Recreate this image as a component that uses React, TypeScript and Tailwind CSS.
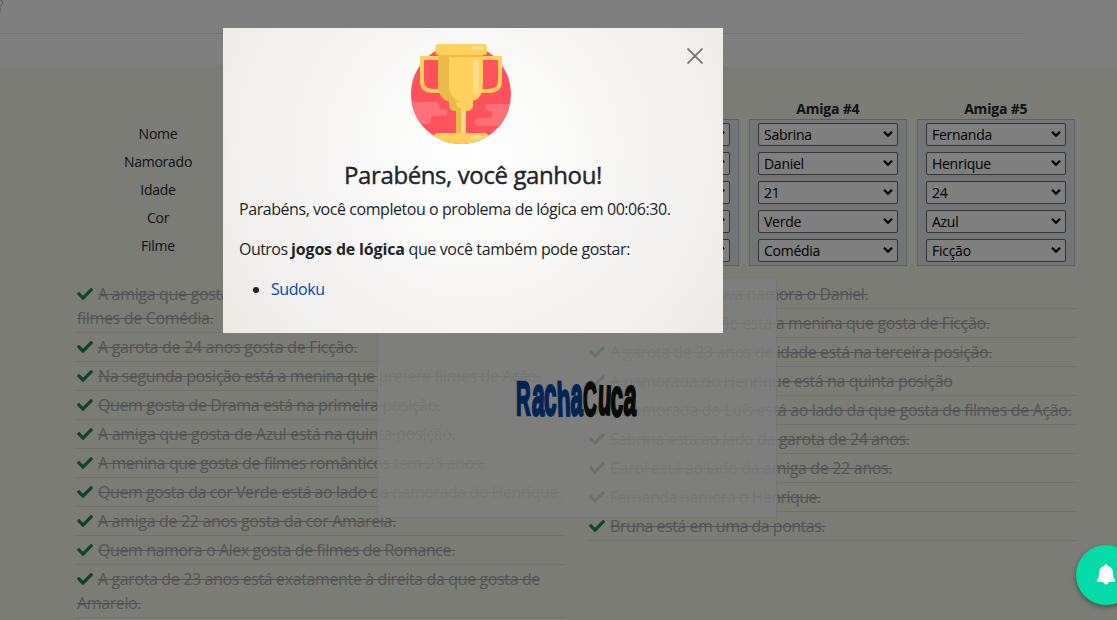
import React from "react";

const left: [string, string][] = [
  ["A amiga que gosta de Verde está ao lado da menina que gosta de filmes de Comédia.", "tracking-[-0.33px]"],
  ["A garota de 24 anos gosta de Ficção.", "tracking-[-0.3px]"],
  ["Na segunda posição está a menina que prefere filmes de Ação.", "tracking-[-0.42px]"],
  ["Quem gosta de Drama está na primeira posição.", "tracking-[-0.39px]"],
  ["A amiga que gosta de Azul está na quinta posição.", "tracking-[-0.29px]"],
  ["A menina que gosta de filmes românticos tem 23 anos.", "tracking-[-0.43px]"],
  ["Quem gosta da cor Verde está ao lado da namorada do Henrique.", "tracking-[-0.43px]"],
  ["A amiga de 22 anos gosta da cor Amarela.", "tracking-[-0.33px]"],
  ["Quem namora o Alex gosta de filmes de Romance.", "tracking-[-0.41px]"],
  ["A garota de 23 anos está exatamente à direita da que gosta de Amarelo.", "tracking-[-0.38px]"],
];

const right: [string, string][] = [
  ["A amiga mais nova namora o Daniel.", "tracking-[-0.4px]"],
  ["Na quinta posição está a menina que gosta de Ficção.", "tracking-[-0.36px]"],
  ["A garota de 23 anos de idade está na terceira posição.", "tracking-[-0.37px]"],
  ["A namorada do Henrique está na quinta posição", "tracking-[-0.41px]"],
  ["A namorada do Luís está ao lado da que gosta de filmes de Ação.", "tracking-[-0.35px]"],
  ["Sabrina está ao lado da garota de 24 anos.", "tracking-[-0.4px]"],
  ["Carol está ao lado da amiga de 22 anos.", "tracking-[-0.35px]"],
  ["Fernanda namora o Henrique.", "tracking-[-0.56px]"],
  ["Bruna está em uma da pontas.", "tracking-[-0.5px]"],
];

const columns = [
  { title: "", values: ["", "", "", "", ""] },
  { title: "", values: ["", "", "", "", ""] },
  { title: "", values: ["", "", "", "", ""] },
  { title: "Amiga #4", values: ["Sabrina", "Daniel", "21", "Verde", "Comédia"] },
  { title: "Amiga #5", values: ["Fernanda", "Henrique", "24", "Azul", "Ficção"] },
];

function Check() {
  return (
    <svg viewBox="0 0 512 512" className="mr-[5px] inline-block size-4 align-[-2px] text-[#198754]" fill="currentColor">
      <path d="M173.898 439.404l-166.4-166.4c-9.997-9.997-9.997-26.206 0-36.204l36.203-36.204c9.997-9.998 26.207-9.998 36.204 0L192 312.69 432.095 72.596c9.997-9.997 26.207-9.997 36.204 0l36.203 36.204c9.997 9.997 9.997 26.206 0 36.204l-294.4 294.401c-9.998 9.997-26.207 9.997-36.204-.001z" />
    </svg>
  );
}

function Clues({ items }: { items: [string, string][] }) {
  return (
    <ul className="w-[488px]">
      {items.map(([text, tracking]) => (
        <li key={text} className="border-b border-[#dededc] pt-0.5 pb-0.5 leading-6">
          <Check />
          <s className={`text-[#a9a9a9] decoration-1 ${tracking}`}>{text}</s>
        </li>
      ))}
    </ul>
  );
}

function Select({ value }: { value: string }) {
  return (
    <div className="flex h-[23px] items-center justify-between rounded-[2px] border border-[#6c6c6c] bg-white pr-[4px] pl-[5px] text-[14px] leading-5 tracking-[-0.25px] text-black">
      <span>{value}</span>
      <svg viewBox="0 0 10 8" className="mb-[2px] h-2 w-2.5" fill="none" stroke="currentColor" strokeWidth="2.2">
        <path d="M1 1.7 5 5.7 9 1.7" />
      </svg>
    </div>
  );
}

function Logo() {
  const glyphs: [string, number, number, number, number, number][] = [
    ["R", -1, 37, 0.42, 1, 0],
    ["a", 14.5, 37, 0.47, 1.14, 2],
    ["c", 27, 36.5, 0.47, 1.14, 0],
    ["h", 40.5, 38, 0.46, 0.98, -2],
    ["a", 53.5, 37, 0.46, 1.14, 0],
    ["C", 66, 37.500, 0.4, 1, 0],
    ["u", 80.500, 36, 0.46, 1.1, 2],
    ["c", 93.500, 37.5, 0.47, 1.12, 0],
    ["a", 106, 36.5, 0.48, 1.1, 3],
  ];
  return (
    <svg viewBox="0 0 120 40" className="h-10 w-[120px] overflow-visible">
      {glyphs.map(([char, x, y, sx, sy, angle], i) => (
        <text
          key={i}
          transform={`translate(${x} ${y}) rotate(${angle}) scale(${sx} ${sy})`}
          fontFamily="Liberation Sans"
          fontWeight="700"
          fontSize="48"
          strokeWidth="2.5"
          className={i < 5 ? "fill-[#0449a8] stroke-[#0449a8]" : "fill-[#161616] stroke-[#161616]"}
        >
          {char}
        </text>
      ))}
    </svg>
  );
}

function Trophy() {
  return (
    <svg viewBox="0 0 100 100" className="size-[100px]">
      <clipPath id="disc"><circle cx="50" cy="50" r="50" /></clipPath>
      <g clipPath="url(#disc)">
        <rect width="100" height="100" fill="#ff525d" />
        <path d="M0 58h25q3 0 3 3v1q0 3 3 3h2a3.500 3.500 0 0 1 0 7H23q-3 0-3 3v1q0 4-4 4H0z" fill="#ff7079" />
        <path d="M100 60H77a3.600 3.600 0 0 0 0 7h2q2.500 0 2.500 2.500T79 74H68a3.500 3.500 0 0 0 0 8h32z" fill="#ff7079" />
        <path d="M23 92q0-3 4-3h46q4 0 4 3v10H23z" fill="#ffd05b" />
      </g>
      <path d="M28 14H11v23q0 10 12 10h12M72 14h17v23q0 10-12 10H65" fill="none" stroke="#ffd05b" strokeWidth="4" />
      <path d="M45 64h9v25h-9z" fill="#ecba4b" />
      <path d="M50 64h5v25h-5z" fill="#ffd05b" />
      <path d="M38 56h24v5q0 6-7 6H45q-7 0-7-6z" fill="#ffd05b" />
      <path d="M38 56h7q0 7 5 9v2h-5q-7 0-7-6z" fill="#ecba4b" />
      <path d="M27 10h45v29q0 19-16 19H43Q27 58 27 39z" fill="#ffd05b" />
      <path d="M27 10h11v30q0 15 12 18h-7Q27 58 27 39z" fill="#ecba4b" />
      <path d="M27 11h45v2H27z" fill="#ecba4b" />
      <rect x="24.500" width="51.500" height="11" rx="3" fill="#ffd05b" />
      <rect x="61" y="2" width="12" height="4" rx="2" fill="#ffdc8c" />
      <rect x="62" y="15" width="6" height="35" rx="3" fill="#ffdc8c" />
      <rect x="51" y="67" width="3" height="22" fill="#ffdc8c" />
      <rect x="59" y="91" width="12" height="4" rx="2" fill="#ffdc8c" />
    </svg>
  );
}

export default function App() {
  return (
    <div className="relative h-[620px] w-[1117px] overflow-hidden bg-white font-['Open_Sans',sans-serif] text-base text-[#212529]">
      <header className="h-[66px]">
        <div className="h-[34px] w-[1023px] border-b border-[#e9e9e9]">
          <svg viewBox="0 0 4 14" className="h-3.5 w-1" fill="none" stroke="#bbb">
            <path d="M0 0q3 0 2.500 3T0 7v6" />
          </svg>
        </div>
      </header>
      <main className="h-[554px] bg-[#f7f8ed] pt-[34px]">
        <div className="flex h-[166px] pl-[77px]">
          <div className="w-[162px] pt-[20px] text-center text-[14px] leading-7 tracking-[-0.25px]">
            {["Nome", "Namorado", "Idade", "Cor", "Filme"].map((l) => <div key={l}>{l}</div>)}
          </div>
          <div className="flex gap-[10.4px] pl-[6px]">
            {columns.map((c, i) => (
              <section key={i} className="w-[157.6px]">
                <h3 className="h-[19px] text-center text-[14px] leading-[17px] font-bold tracking-[-0.2px]">{c.title}</h3>
                <div className="flex h-[147px] flex-col gap-1.5 border border-[#b8c0cb] bg-[#e9eaed] px-2 pt-[3px]">
                  {c.values.map((v, row) => <Select key={row} value={v} />)}
                </div>
              </section>
            ))}
          </div>
        </div>
        <div className="flex gap-6 pt-[14px] pl-[77px]">
          <Clues items={left} />
          <Clues items={right} />
        </div>
      </main>

      <div className="absolute top-[278px] left-[377px] flex h-[240px] w-[400px] items-center justify-center border border-[#ececf2] bg-white/78">
        <Logo />
      </div>
      <div className="absolute inset-0 bg-black/50" />

      <div
        role="dialog"
        className="absolute top-[28px] left-[223px] h-[305px] w-[500px] bg-[radial-gradient(circle_at_50%_40%,#fff_0%,#f1f0ee_75%,#ece8e4_100%)] px-4 pt-4"
      >
        <svg viewBox="0 0 16 16" className="absolute top-5 right-5 size-4" fill="none" stroke="#777" strokeWidth="1.8">
          <path d="M.5.5l15 15M15.500.5l-15 15" />
        </svg>
        <div className="flex justify-center pr-6"><Trophy /></div>
        <h2 className="mt-[16px] text-center text-2xl leading-[29px] font-medium tracking-[-0.4px] [-webkit-text-stroke:0.4px_#212529]">Parabéns, você ganhou!</h2>
        <p className="mt-2 leading-6 tracking-[-0.44px]">Parabéns, você completou o problema de lógica em 00:06:30.</p>
        <p className="mt-4 leading-6 tracking-[-0.37px]">
          <span className="tracking-[-0.55px]">Outros </span>
          <strong className="tracking-[-0.17px]">jogos de lógica</strong> que você também pode gostar:
        </p>
        <ul className="mt-4 list-disc pl-8 leading-6 tracking-[-0.45px]">
          <li><a className="text-[#0449a8]">Sudoku</a></li>
        </ul>
      </div>

      <button className="absolute top-[545px] left-[1076px] flex size-[60px] items-center justify-center rounded-full bg-[#03dba8] shadow-[0_2px_5px_rgba(0,0,0,.4)]">
        <svg viewBox="0 0 20 22" className="h-[22px] w-5" fill="#fff">
          <path d="M10 0q1.500 0 1.500 1.800Q17 3 17 9q0 5 2 7v2h-6.500a2.500 2.500 0 0 1-5 0H1v-2q2-2 2-7 0-6 5.500-7.200Q8.500 0 10 0z" />
        </svg>
      </button>
    </div>
  );
}
